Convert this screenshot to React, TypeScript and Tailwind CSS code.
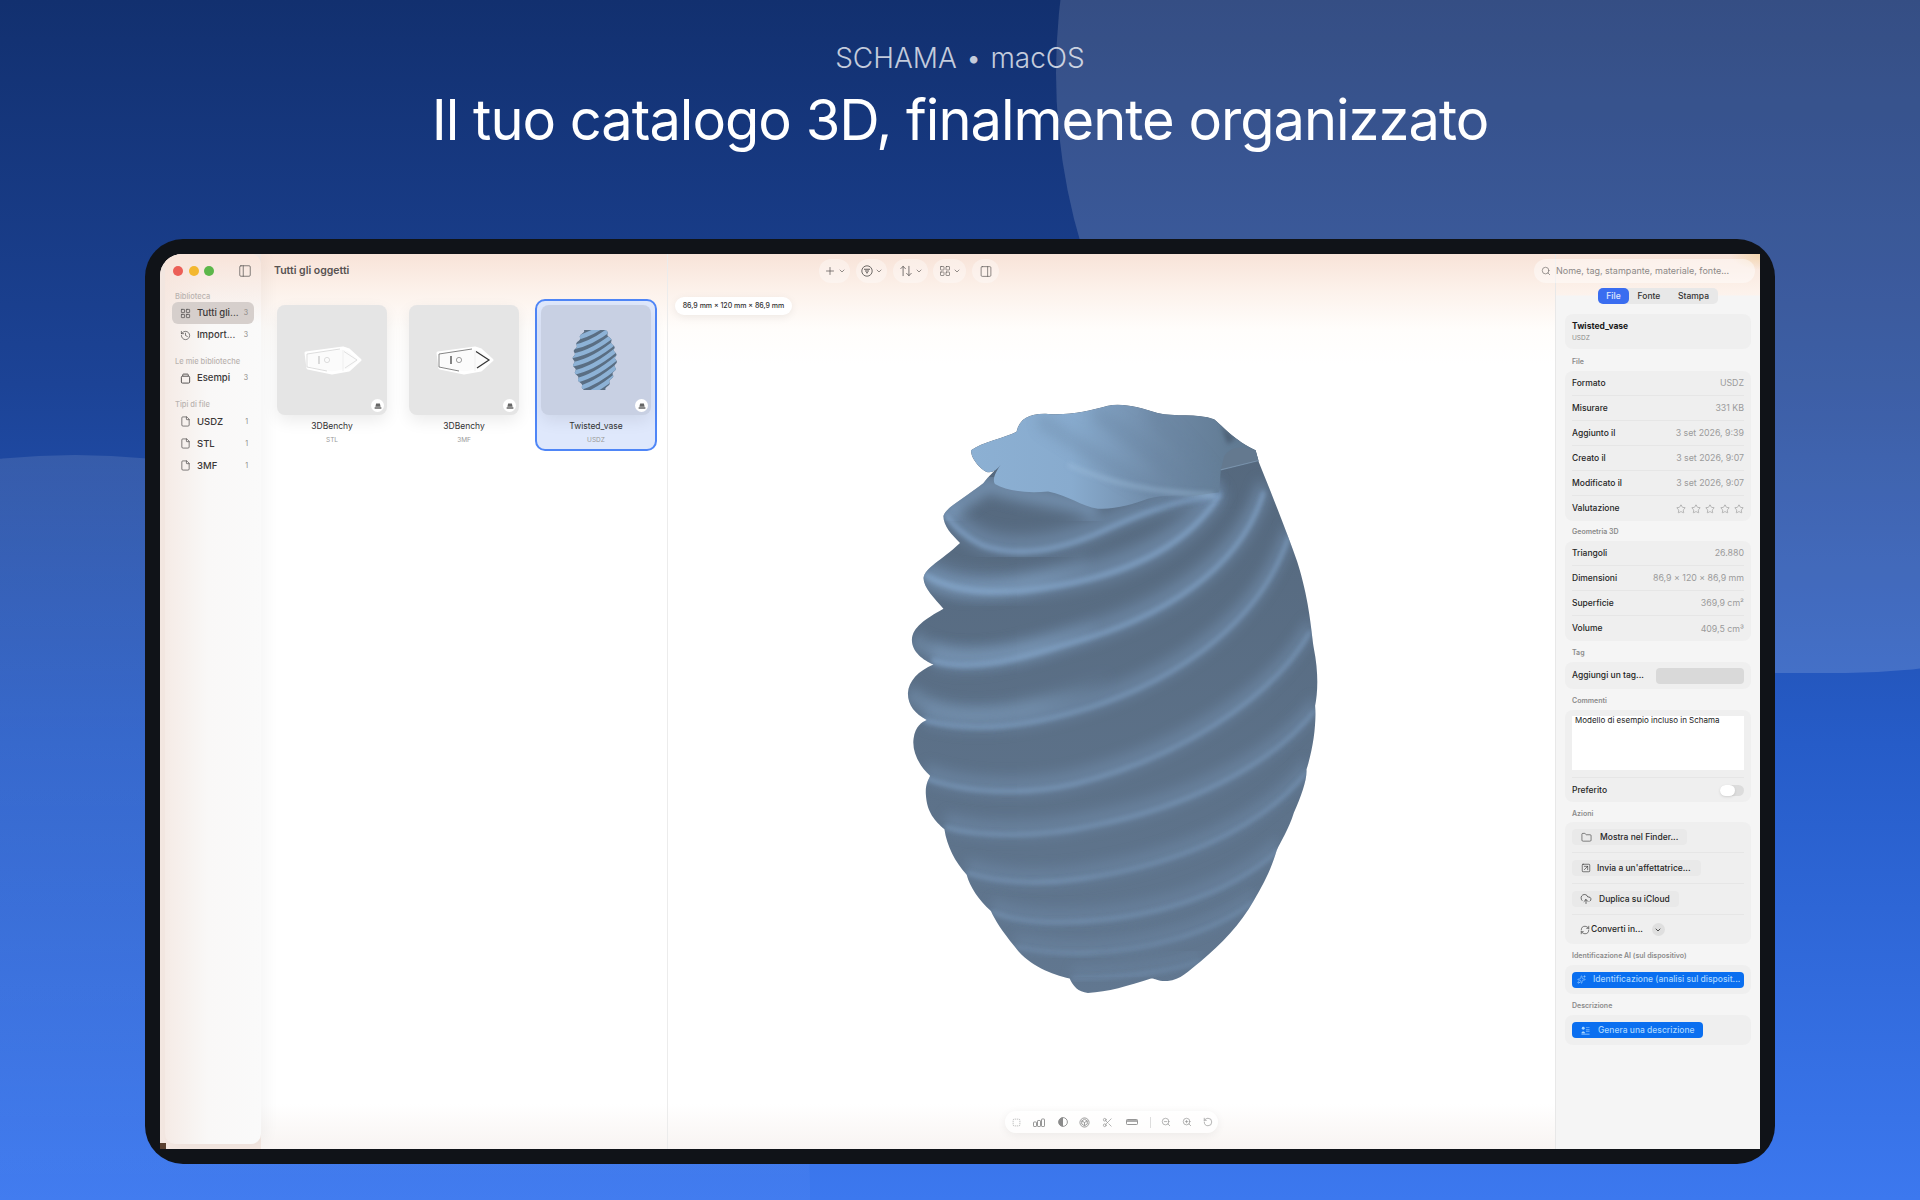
import {
  ArrowUpDown, ChevronDown, CloudUpload, File, Folder, History, LayoutGrid, PanelLeft, PanelRight, Plus,
  RefreshCw, RotateCcw, Scissors, Search, Sparkles, SquareArrowUpRight, SquareDashed, Star, ZoomIn, ZoomOut,
} from "lucide-react"
import type { ReactNode } from "react"

const FONT = "font-['Inter','Liberation_Sans',sans-serif]"

function SidebarRow({ icon, label, count, active }: { icon: ReactNode; label: string; count: string; active?: boolean }) {
  return (
    <div className={`flex h-[22px] items-center rounded-md pl-[8px] pr-[6px] text-[#3b3838] ${active ? "bg-[#d6cfcc]" : ""}`}>
      <span className="flex w-[17px] shrink-0 items-center text-[#4a4747]">{icon}</span>
      <span className="flex-1 truncate text-[9.5px] font-medium">{label}</span>
      <span className="text-[7px] text-[#8b8785]">{count}</span>
    </div>
  )
}

function SidebarLabel({ children, className }: { children: string; className: string }) {
  return <div className={`pl-[3px] text-[7.5px] font-medium text-[#b9b3b0] ${className}`}>{children}</div>
}

function BenchyThumb({ dark }: { dark?: boolean }) {
  return (
    <svg viewBox="0 0 110 110" className="h-full w-full">
      <path d="M29 48 L66 43 L72 45 L83 55 L72 65 L55 68 L31 63 Z" fill="#fbfbfb" stroke="#ffffff" strokeWidth="3" strokeLinejoin="round" />
      <path d="M30 49 L63 44 M30 49 L30 62 L50 66" fill="none" stroke={dark ? "#666" : "#d4d4d4"} strokeWidth="0.8" />
      <path d="M67 46.5 L80 55 L68 63" fill="none" stroke={dark ? "#333" : "#d8d8d8"} strokeWidth={dark ? 1.2 : 0.8} />
      <path d="M42 51 V59" stroke={dark ? "#333" : "#c4c4c4"} strokeWidth="1.2" />
      <circle cx="50" cy="55" r="2.6" fill="none" stroke={dark ? "#777" : "#d0d0d0"} strokeWidth="0.7" />
      <path d="M66 45 V66" stroke="#ededed" strokeWidth="0.8" />
    </svg>
  )
}

// small vase silhouette with scalloped sides
function thumbOutline() {
  const right: string[] = []
  const left: string[] = []
  for (let i = 0; i <= 60; i++) {
    const t = i / 60
    const base = 10 + 10.5 * Math.sin(Math.PI * t)
    const bump = 1 * Math.sin(t * Math.PI * 16)
    right.push(`${(54.5 + base + bump).toFixed(1)} ${(25 + t * 60).toFixed(1)}`)
    left.unshift(`${(54 - base - 1 + bump).toFixed(1)} ${(25 + t * 60).toFixed(1)}`)
  }
  return `M${[...right, ...left].join(" L")} Z`
}

function VaseThumb() {
  return (
    <svg viewBox="0 0 110 110" className="h-full w-full">
      <defs>
        <clipPath id="vase-thumb">
          <path d={thumbOutline()} />
        </clipPath>
      </defs>
      <g clipPath="url(#vase-thumb)">
        <rect x="30" y="20" width="50" height="70" fill="#5a6e83" />
        {[20, 28.5, 37, 45.5, 54, 62.5, 71, 79.5, 88, 96.5, 105].map((y) => (
          <path key={y} d={`M28 ${y + 6} C44 ${y + 4} 62 ${y - 6} 78 ${y - 20}`} fill="none" stroke="#8db2d6" strokeWidth="4.4" />
        ))}
      </g>
    </svg>
  )
}

function ItemCard({ name, type, thumb, selected }: { name: string; type: string; thumb: ReactNode; selected?: boolean }) {
  return (
    <div className={`flex h-[152px] w-[122px] flex-col items-center rounded-[10px] border-2 px-[5px] pt-[4px] ${selected ? "border-[#4f86f7] bg-[#dfe8fc]" : "border-transparent"}`}>
      <div className={`relative h-[110px] w-[110px] shrink-0 rounded-[8px] shadow-[0_6px_16px_rgba(0,0,0,0.08)] ${selected ? "bg-[#c8d0e3]" : "bg-[#e5e5e5]"}`}>
        {thumb}
        <span className="absolute bottom-[3px] right-[3px] flex h-[13px] w-[13px] items-center justify-center rounded-full bg-white">
          <svg viewBox="0 0 10 8" className="h-[6px] w-[8px]" fill="#666">
            <path d="M2.5 0.5 H7.5 L8.5 5 H1.5 Z M0.5 5.5 H9.5 V7.5 H0.5 Z" />
          </svg>
        </span>
      </div>
      <div className="mt-[5px] text-[8.5px] leading-[12px] text-[#333]">{name}</div>
      <div className="mt-[3px] text-[6.5px] leading-[10px] text-[#9a9a9a]">{type}</div>
    </div>
  )
}

function ToolPill({ width, children }: { width: string; children: ReactNode }) {
  return <div className={`flex h-[24px] items-center justify-center gap-[2px] rounded-full bg-white/35 text-[#5e5a58] ${width}`}>{children}</div>
}

function InfoRow({ label, value, last }: { label: string; value: ReactNode; last?: boolean }) {
  return (
    <div className={`flex h-[25px] items-center justify-between ${last ? "" : "border-b border-[#e6e6e6]"}`}>
      <span className="text-[8.5px] font-medium text-[#262626]">{label}</span>
      <span className="text-[8.8px] text-[#9b9b9b]">{value}</span>
    </div>
  )
}

function SectionLabel({ children, className }: { children: string; className: string }) {
  return <div className={`pl-[7px] text-[7px] font-semibold leading-[10px] text-[#8b8b8b] ${className}`}>{children}</div>
}

function ActionRow({ icon, label, width, textGap }: { icon: ReactNode; label: string; width: string; textGap: string }) {
  return (
    <div className="flex h-[31px] items-center border-b border-[#e6e6e6]">
      <div className={`flex h-[16px] items-center rounded-[4px] bg-[#e9e9e9] pl-[8px] text-[8.5px] font-medium text-[#262626] ${width} ${textGap}`}>
        {icon}
        <span>{label}</span>
      </div>
    </div>
  )
}

function Vase() {
  const ridges = [
    ["M1010 290 C880 300 760 340 640 385 C520 425 400 440 300 410 C250 390 215 365 190 335", 14],
    ["M1020 285 C900 440 660 500 430 520 C300 530 200 520 125 480", 16],
    ["M1150 280 C1080 470 840 590 560 650 C400 690 260 720 150 690", 13],
    ["M1225 390 C1130 620 840 760 560 820 C380 860 240 860 125 835", 10],
    ["M1290 620 C1170 790 880 930 580 990 C420 1020 240 1010 130 975", 9],
    ["M1305 810 C1170 950 900 1050 640 1090 C480 1120 300 1120 190 1095", 8],
    ["M1280 960 C1130 1110 860 1190 600 1220 C480 1235 350 1230 255 1205", 7],
    ["M1195 1150 C1030 1270 780 1320 560 1325 C470 1328 390 1320 330 1300", 6],
    ["M1120 1275 C980 1360 780 1395 620 1400 C540 1402 460 1395 400 1385", 5],
    ["M960 1420 C850 1450 700 1462 570 1462", 4],
  ] as const
  const outline =
    "M268 180 C300 160 370 150 405 135 C415 100 450 90 500 92 C570 95 620 85 680 72 C730 65 780 78 830 90 C880 100 950 90 1000 105 C1030 125 1060 155 1125 180 L1135 210 C1170 280 1215 370 1250 450 C1285 540 1290 600 1300 660 C1315 720 1312 770 1304 800 C1308 840 1300 900 1278 955 C1280 980 1262 1020 1240 1060 C1225 1100 1200 1130 1188 1152 C1170 1200 1150 1230 1120 1272 C1080 1330 1020 1380 960 1420 C920 1445 900 1465 860 1468 C830 1470 820 1460 810 1462 C740 1480 680 1495 620 1497 C590 1495 575 1480 565 1462 C510 1452 440 1430 400 1385 C360 1345 340 1320 328 1298 C290 1270 265 1240 255 1210 C220 1180 195 1140 188 1100 C160 1080 135 1060 132 1015 C130 990 140 980 145 970 C110 945 90 910 95 880 C100 850 120 840 135 835 C100 820 78 800 78 770 C80 740 110 715 155 700 C125 690 90 670 90 640 C92 610 130 590 185 565 C160 540 125 515 125 490 C130 465 175 450 235 405 C210 385 185 365 185 340 C190 320 250 295 305 260 C320 245 345 225 358 215 C340 235 320 240 300 225 C280 210 268 195 268 180 Z"
  const lip =
    "M268 180 C300 160 370 150 405 135 C415 100 450 90 500 92 C570 95 620 85 680 72 C730 65 780 78 830 90 C880 100 950 90 1000 105 C1030 125 1060 155 1125 180 L1135 205 L1020 228 L1015 282 L930 292 C880 288 840 290 800 298 C760 310 700 325 650 322 C600 315 560 290 500 280 C440 285 380 280 340 262 C330 250 345 230 358 215 C340 235 320 240 300 225 C280 210 268 195 268 180 Z"
  return (
    <svg viewBox="0 0 1385 1553" preserveAspectRatio="none" className="h-[640px] w-[460px]">
      <defs>
        <clipPath id="vase-clip">
          <path d={outline} />
        </clipPath>
        <filter id="soft" x="-20%" y="-20%" width="140%" height="140%">
          <feGaussianBlur stdDeviation="6" />
        </filter>
        <filter id="softer" x="-20%" y="-20%" width="140%" height="140%">
          <feGaussianBlur stdDeviation="18" />
        </filter>
        <linearGradient id="lip" x1="0" y1="0" x2="1" y2="0">
          <stop offset="0" stopColor="#8cb0d3" />
          <stop offset="0.35" stopColor="#88abce" />
          <stop offset="0.65" stopColor="#708ba8" />
          <stop offset="1" stopColor="#5d768d" />
        </linearGradient>
        <linearGradient id="body" x1="0" y1="0" x2="0" y2="1">
          <stop offset="0" stopColor="#54677c" />
          <stop offset="1" stopColor="#617790" />
        </linearGradient>
        <linearGradient id="lobe" gradientUnits="userSpaceOnUse" x1="100" y1="0" x2="700" y2="0">
          <stop offset="0" stopColor="#8db0d4" />
          <stop offset="0.6" stopColor="#8db0d4" />
          <stop offset="1" stopColor="#8db0d4" stopOpacity="0" />
        </linearGradient>
      </defs>
      <path d={outline} fill="url(#body)" />
      <g clipPath="url(#vase-clip)">
        {/* soft falloff sits above each crest, the crest itself stays thin */}
        <g transform="translate(0,-14)">
          {ridges.map(([d, w]) => (
            <path key={`g${d}`} d={d} fill="none" stroke="#7f9fc2" strokeWidth={w * 3.4} opacity="0.5" filter="url(#softer)" />
          ))}
        </g>
        {ridges.map(([d, w]) => (
          <path key={d} d={d} fill="none" stroke="#86a9cf" strokeWidth={w * 0.8} opacity="0.75" filter="url(#soft)" />
        ))}
        <path d="M125 490 C250 540 440 520 620 450 M90 640 C220 710 440 680 640 610 M78 770 C230 860 480 810 700 730" fill="none" stroke="url(#lobe)" strokeWidth="26" opacity="0.55" filter="url(#softer)" />
        <path d="M190 335 C230 310 280 285 320 262 C420 295 540 290 650 330" fill="none" stroke="#86a8cc" strokeWidth="34" opacity="0.75" filter="url(#softer)" />
        <path d={lip} fill="url(#lip)" />
        <path d="M470 105 C600 170 720 240 860 295 M640 90 C760 150 860 220 960 285 M810 90 C880 140 950 200 1010 270" fill="none" stroke="#66819d" strokeWidth="30" opacity="0.4" filter="url(#softer)" />
        <path d="M560 215 C680 260 820 285 1000 288" fill="none" stroke="#a0c0de" strokeWidth="9" opacity="0.55" filter="url(#soft)" />
        <path d="M1020 118 L1065 152 L1040 165 Z" fill="#4d6075" filter="url(#soft)" />
        <path d="M1020 228 L1135 205 L1125 180 C1085 170 1050 170 1030 195 Z" fill="#64798f" />
        <path d="M1020 228 L1135 205" fill="none" stroke="#8fadc9" strokeWidth="3" opacity="0.5" />
      </g>
    </svg>
  )
}

export default function App() {
  return (
    <div className={`relative h-[1200px] w-full overflow-hidden bg-[linear-gradient(to_bottom,#12306f_0%,#1c4396_32%,#265cc8_62%,#3c78ef_100%)] ${FONT}`}>
      <div className="absolute left-[1056px] top-[-527px] h-[1200px] w-[1390px] rounded-full bg-white/15" />
      <div className="absolute left-[-660px] top-[455px] h-[1470px] w-[1470px] rounded-full bg-[linear-gradient(to_bottom,rgba(255,255,255,0.11),rgba(255,255,255,0.03)_50%)]" />

      <header className="relative flex flex-col items-center pt-[40px] text-center">
        <div className="text-[28px] font-light leading-[36px] text-white/75">SCHAMA&nbsp;<span className="mx-[1px]">•</span>&nbsp;macOS</div>
        <h1 className="mt-[8px] text-[56px] font-normal leading-[72px] tracking-[-1px] text-white">Il tuo catalogo 3D, finalmente organizzato</h1>
      </header>

      <div className="relative ml-[145px] mt-[83px] h-[925px] w-[1630px] rounded-[38px] bg-[#101318] p-[15px]">
        <div className="relative flex h-full w-full overflow-hidden rounded-tl-[22px] bg-[linear-gradient(to_bottom,#f8e3d8_0px,#fcf1ea_35px,#fffdfb_75px,#ffffff_110px,#ffffff_850px,#f8f4f2_895px)]">
          {/* corner tint of the window */}
          <div className="absolute right-0 top-0 h-[16px] w-[30px] bg-[radial-gradient(at_top_right,#f3d6ae,transparent_70%)]" />

          {/* sidebar */}
          <div className="relative z-10 flex w-[101px] shrink-0 bg-[#f3e7e1] pb-[5px] pl-[5px]">
            <div className="absolute bottom-0 left-0 h-[6px] w-[6px] bg-[#5a4030]" />
            <aside className="relative flex w-full flex-col rounded-r-[10px] rounded-bl-[10px] bg-[linear-gradient(to_bottom,#f8e4da,transparent_70px),linear-gradient(to_right,#f5ebe6,#f9f8f7_45%,#fafafa)] pl-[7px] pr-[7px] shadow-[6px_0_14px_rgba(0,0,0,0.04)]">
              <div className="flex h-[34px] items-center justify-between pl-[1px] pr-[2px]">
                <div className="flex gap-[5.5px]">
                  <span className="h-[10px] w-[10px] rounded-full bg-[#ec5f57]" />
                  <span className="h-[10px] w-[10px] rounded-full bg-[#f3b72f]" />
                  <span className="h-[10px] w-[10px] rounded-full bg-[#5cb74a]" />
                </div>
                <PanelLeft className="h-[14px] w-[14px] text-[#5e5a58]" strokeWidth={1.3} />
              </div>
              <SidebarLabel className="mt-[3px]">Biblioteca</SidebarLabel>
              <SidebarRow active icon={<LayoutGrid className="h-[11px] w-[11px]" strokeWidth={1.5} />} label="Tutti gli..." count="3" />
              <SidebarRow icon={<History className="h-[11px] w-[11px]" strokeWidth={1.5} />} label="Import..." count="3" />
              <SidebarLabel className="mt-[10px]">Le mie biblioteche</SidebarLabel>
              <SidebarRow
                icon={
                  <svg viewBox="0 0 12 12" className="h-[11px] w-[11px]" fill="none" stroke="currentColor" strokeWidth="1">
                    <rect x="1.5" y="3.5" width="9" height="7.5" rx="1.2" />
                    <path d="M3 3.5 V2 C3 1.5 3.3 1.2 3.8 1.2 H8.2 C8.7 1.2 9 1.5 9 2 V3.5" />
                  </svg>
                }
                label="Esempi"
                count="3"
              />
              <SidebarLabel className="mt-[9px] mb-[1px]">Tipi di file</SidebarLabel>
              {["USDZ", "STL", "3MF"].map((t) => (
                <SidebarRow key={t} icon={<File className="h-[11px] w-[11px]" strokeWidth={1.5} />} label={t} count="1" />
              ))}
            </aside>
          </div>

          {/* grid of items */}
          <section className="flex w-[407px] shrink-0 flex-col border-r border-[#ececec]">
            <div className="flex h-[34px] items-center pl-[13px] text-[10.5px] font-semibold text-[#575251]">Tutti gli oggetti</div>
            <div className="ml-[10px] mt-[11px] flex gap-[10px]">
              <ItemCard name="3DBenchy" type="STL" thumb={<BenchyThumb />} />
              <ItemCard name="3DBenchy" type="3MF" thumb={<BenchyThumb dark />} />
              <ItemCard name="Twisted_vase" type="USDZ" thumb={<VaseThumb />} selected />
            </div>
          </section>

          {/* 3D viewer */}
          <section className="relative flex min-w-0 flex-1 items-center justify-center">
            <div className="absolute left-[151px] top-[5px] flex gap-[6px]">
              <ToolPill width="w-[31px]">
                <Plus className="h-[12px] w-[12px]" strokeWidth={1.5} />
                <ChevronDown className="h-[8px] w-[8px]" strokeWidth={2} />
              </ToolPill>
              <ToolPill width="w-[31px]">
                <svg viewBox="0 0 12 12" className="h-[12px] w-[12px]" fill="none" stroke="currentColor" strokeWidth="0.9">
                  <circle cx="6" cy="6" r="5.2" />
                  <path d="M3 4.2 H9 M4 6 H8 M5 7.8 H7" strokeWidth="1.1" />
                </svg>
                <ChevronDown className="h-[8px] w-[8px]" strokeWidth={2} />
              </ToolPill>
              <ToolPill width="w-[35px]">
                <ArrowUpDown className="h-[14px] w-[14px]" strokeWidth={1.4} />
                <ChevronDown className="h-[8px] w-[8px]" strokeWidth={2} />
              </ToolPill>
              <div className="-ml-[1px]">
                <ToolPill width="w-[33px]">
                  <LayoutGrid className="h-[12px] w-[12px]" strokeWidth={1.3} />
                  <ChevronDown className="h-[8px] w-[8px]" strokeWidth={2} />
                </ToolPill>
              </div>
              <ToolPill width="w-[27px]">
                <PanelRight className="h-[13px] w-[14px]" strokeWidth={1.3} />
              </ToolPill>
            </div>

            <div className="absolute left-[7px] top-[43px] flex h-[18px] w-[117px] items-center justify-center rounded-full bg-white text-[7px] font-medium text-[#333] shadow-[0_2px_8px_rgba(0,0,0,0.07)]">
              86,9 mm × 120 mm × 86,9 mm
            </div>

            <div className="mb-[12px]">
              <Vase />
            </div>

            <div className="absolute bottom-[16px] left-[337px] flex h-[22px] w-[213px] items-center rounded-full bg-white/70 pl-[6.5px] text-[#8a8a8a] shadow-[0_2px_10px_rgba(0,0,0,0.06)]">
              <SquareDashed className="h-[9px] w-[9px]" strokeWidth={1.4} />
              <svg viewBox="0 0 12 9" className="ml-[12.5px] h-[9px] w-[12px]" fill="none" stroke="currentColor" strokeWidth="0.9">
                <rect x="0.5" y="4" width="3" height="4.5" rx="0.6" />
                <rect x="4.5" y="2.5" width="3" height="6" rx="0.6" />
                <rect x="8.5" y="1" width="3" height="7.5" rx="0.6" />
              </svg>
              <svg viewBox="0 0 10 10" className="ml-[13px] h-[10px] w-[10px]" fill="none" stroke="currentColor" strokeWidth="0.9">
                <circle cx="5" cy="5" r="4.4" />
                <path d="M5 0.6 A4.4 4.4 0 0 0 5 9.4 Z" fill="currentColor" stroke="none" />
              </svg>
              <svg viewBox="0 0 12 12" className="ml-[10.5px] h-[11px] w-[11px]" fill="none" stroke="currentColor" strokeWidth="0.9">
                <circle cx="6" cy="6" r="5" />
                <path d="M6 2.5 L9 4.2 V7.8 L6 9.5 L3 7.8 V4.2 Z M3 4.2 L6 6 L9 4.2 M6 6 V9.5" />
              </svg>
              <Scissors className="ml-[12px] h-[11px] w-[11px]" strokeWidth={1.4} />
              <svg viewBox="0 0 12 6" className="ml-[13.5px] h-[6px] w-[12px]" fill="none" stroke="currentColor" strokeWidth="0.9">
                <rect x="0.5" y="0.5" width="11" height="5" rx="0.8" />
                <path d="M1 2 H11" strokeWidth="1.4" />
              </svg>
              <span className="ml-[12px] h-[11px] w-px bg-[#dddddd]" />
              <ZoomOut className="ml-[10px] h-[10px] w-[10px]" strokeWidth={1.5} />
              <ZoomIn className="ml-[11px] h-[10px] w-[10px]" strokeWidth={1.5} />
              <RotateCcw className="ml-[11px] h-[10px] w-[10px]" strokeWidth={1.5} />
            </div>
          </section>

          {/* inspector */}
          <aside className="flex w-[205px] shrink-0 flex-col border-l border-[#e8e8e8] bg-[linear-gradient(to_bottom,transparent_0px,transparent_41px,#f5f5f5_42px)] px-[9px]">
            <div className="mt-[34px] flex justify-center">
              <div className="flex h-[16px] w-[120px] items-center rounded-[5px] bg-[#e8e8e8] text-[8.5px] font-medium text-[#333]">
                <span className="flex h-full w-[31px] items-center justify-center rounded-[5px] bg-[#3a6df0] text-white/85">File</span>
                <span className="w-[40px] text-center">Fonte</span>
                <span className="flex-1 text-center">Stampa</span>
              </div>
            </div>

            <div className="mt-[10px] flex h-[35px] flex-col justify-center rounded-[8px] bg-[#efefef] px-[7px]">
              <div className="text-[8.5px] font-bold leading-[12px] text-[#1a1a1a]">Twisted_vase</div>
              <div className="mt-[2px] text-[6.5px] leading-[9px] text-[#8a8a8a]">USDZ</div>
            </div>

            <SectionLabel className="mt-[8px] mb-[4px]">File</SectionLabel>
            <div className="rounded-[8px] bg-[#efefef] px-[7px]">
              <InfoRow label="Formato" value="USDZ" />
              <InfoRow label="Misurare" value="331 KB" />
              <InfoRow label="Aggiunto il" value="3 set 2026, 9:39" />
              <InfoRow label="Creato il" value="3 set 2026, 9:07" />
              <InfoRow label="Modificato il" value="3 set 2026, 9:07" />
              <InfoRow
                last
                label="Valutazione"
                value={
                  <span className="flex gap-[4.5px]">
                    {[0, 1, 2, 3, 4].map((i) => (
                      <Star key={i} className="h-[10px] w-[10px] text-[#7e7e7e]" strokeWidth={1.2} />
                    ))}
                  </span>
                }
              />
            </div>

            <SectionLabel className="mt-[6px] mb-[4px]">Geometria 3D</SectionLabel>
            <div className="rounded-[8px] bg-[#efefef] px-[7px]">
              <InfoRow label="Triangoli" value="26.880" />
              <InfoRow label="Dimensioni" value="86,9 × 120 × 86,9 mm" />
              <InfoRow label="Superficie" value="369,9 cm²" />
              <InfoRow last label="Volume" value="409,5 cm³" />
            </div>

            <SectionLabel className="mt-[7px] mb-[4px]">Tag</SectionLabel>
            <div className="flex h-[27px] items-center justify-between rounded-[8px] bg-[#efefef] px-[7px]">
              <span className="text-[8.5px] font-medium text-[#262626]">Aggiungi un tag...</span>
              <span className="h-[16px] w-[88px] rounded-[4px] bg-[#d9d9d9]" />
            </div>

            <SectionLabel className="mt-[7px] mb-[4px]">Commenti</SectionLabel>
            <div className="rounded-[8px] bg-[#efefef] px-[7px] pt-[6px]">
              <div className="h-[54px] bg-white px-[3px] text-[8px] leading-[9px] text-[#222]">Modello di esempio incluso in Schama</div>
              <div className="mt-[7px] flex h-[25px] items-center justify-between border-t border-[#e6e6e6]">
                <span className="text-[8.5px] font-medium text-[#262626]">Preferito</span>
                <span className="relative h-[11px] w-[24px] rounded-full bg-[#dcdcdc]">
                  <span className="absolute left-0 top-0 h-[11px] w-[15px] rounded-full bg-white shadow-sm" />
                </span>
              </div>
            </div>

            <SectionLabel className="mt-[7px] mb-[3px]">Azioni</SectionLabel>
            <div className="rounded-[8px] bg-[#efefef] px-[7px]">
              <ActionRow width="w-[115px]" textGap="gap-[8px]" icon={<Folder className="ml-[1px] h-[11px] w-[11px]" strokeWidth={1.2} />} label="Mostra nel Finder..." />
              <ActionRow width="w-[129px]" textGap="gap-[6px]" icon={<SquareArrowUpRight className="ml-[1px] h-[10px] w-[10px]" strokeWidth={1.4} />} label="Invia a un'affettatrice..." />
              <ActionRow width="w-[107px]" textGap="gap-[7px]" icon={<CloudUpload className="h-[12px] w-[12px]" strokeWidth={1.3} />} label="Duplica su iCloud" />
              <div className="flex h-[29px] items-center pl-[8px] text-[8.5px] font-medium text-[#262626]">
                <RefreshCw className="mr-[1px] h-[10px] w-[10px]" strokeWidth={1.4} />
                <span>Converti in...</span>
                <span className="ml-[9px] flex h-[13px] w-[13px] items-center justify-center rounded-full bg-[#dfdfdf]">
                  <ChevronDown className="h-[8px] w-[8px]" strokeWidth={2.4} />
                </span>
              </div>
            </div>

            <SectionLabel className="mt-[7px] mb-[4px]">Identificazione AI (sul dispositivo)</SectionLabel>
            <div className="flex h-[29px] items-center rounded-[8px] bg-[#efefef] px-[7px]">
              <div className="flex h-[16px] w-full items-center rounded-[4px] bg-[#0a6ff0] pl-[5px] text-[8.5px] font-medium text-[#a9d6ff]">
                <Sparkles className="h-[9px] w-[9px]" strokeWidth={1.5} />
                <span className="ml-[7px] truncate">Identificazione (analisi sul disposit...</span>
              </div>
            </div>

            <SectionLabel className="mt-[7px] mb-[4px]">Descrizione</SectionLabel>
            <div className="flex h-[30px] items-center rounded-[8px] bg-[#efefef] px-[7px]">
              <div className="flex h-[16px] w-[131px] items-center rounded-[4px] bg-[#0a6ff0] pl-[9px] text-[8.5px] font-medium text-[#a9d6ff]">
                <svg viewBox="0 0 10 10" className="h-[9px] w-[9px]" fill="currentColor">
                  <circle cx="2.5" cy="2.5" r="1.6" />
                  <path d="M0.5 8 C0.5 5.5 4.5 5.5 4.5 8 Z M5.5 1 H9.5 V1.8 H5.5 Z M5.5 3.2 H9.5 V4 H5.5 Z M5.5 5.4 H9.5 V6.2 H5.5 Z M0.5 8.6 H9.5 V9.4 H0.5 Z" />
                </svg>
                <span className="ml-[8px]">Genera una descrizione</span>
              </div>
            </div>
          </aside>

          {/* search sits over the viewer and the inspector */}
          <div className="absolute right-[5px] top-[5px] flex h-[24px] w-[221px] items-center gap-[5px] rounded-full bg-white/45 pl-[7px] text-[9px] text-[#8d8988]">
            <Search className="h-[10px] w-[10px] text-[#6f6b6a]" strokeWidth={1.6} />
            <span>Nome, tag, stampante, materiale, fonte...</span>
          </div>
        </div>
      </div>
    </div>
  )
}
